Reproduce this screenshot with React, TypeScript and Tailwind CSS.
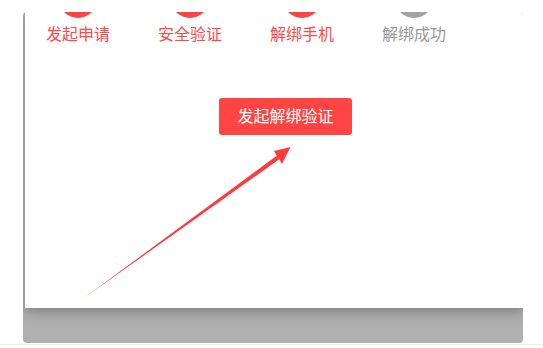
import React from "react";

const steps = [
  { label: "发起申请", active: true },
  { label: "安全验证", active: true },
  { label: "解绑手机", active: true },
  { label: "解绑成功", active: false },
];

export default function App() {
  return (
    <div
      className="w-[543px] h-[348px] bg-white overflow-hidden relative"
      style={{ fontFamily: '"Liberation Sans", "Noto Sans CJK SC", sans-serif' }}
    >
      <div className="pt-[12px] pl-[23px] pr-[20px]">
        <div className="h-[331px] rounded-[4px] overflow-hidden bg-[#b0b0b0] flex flex-col">
          <div className="ml-[2px] h-[296px] shrink-0 bg-white shadow-[0_4px_12px_rgba(0,0,0,0.28)] relative flex flex-col">
            <div className="flex ml-[-3px] mt-[-32px]">
              {steps.map((s) => (
                <div key={s.label} className="w-[112px] flex flex-col items-center">
                  <div
                    className={
                      s.active
                        ? "w-[38px] h-[38px] rounded-full bg-[#ff4444]"
                        : "w-[38px] h-[38px] rounded-full bg-[#a3a3a3]"
                    }
                  />
                  <div
                    className={
                      s.active
                        ? "mt-[5px] text-[16px] leading-[24px] text-[#ff4a4a]"
                        : "mt-[5px] text-[16px] leading-[24px] text-[#999999]"
                    }
                  >
                    {s.label}
                  </div>
                </div>
              ))}
            </div>
            <div className="mt-[51px] ml-[194px]">
              <button className="w-[133px] h-[37px] rounded-[3px] bg-[#ff4444] text-white text-[16px] leading-[37px] text-center">
                发起解绑验证
              </button>
            </div>
            <svg
              className="absolute left-0 top-0 pointer-events-none"
              width="498"
              height="296"
              viewBox="25 12 498 296"
            >
              <polygon
                points="84,298 276.7,155.7 274,151 290.5,147 282,164 279.3,159.3"
                fill="#ff3b3b"
              />
            </svg>
          </div>
        </div>
      </div>
      <div className="h-[1px] mt-[1px] bg-[#ececec]" />
    </div>
  );
}
